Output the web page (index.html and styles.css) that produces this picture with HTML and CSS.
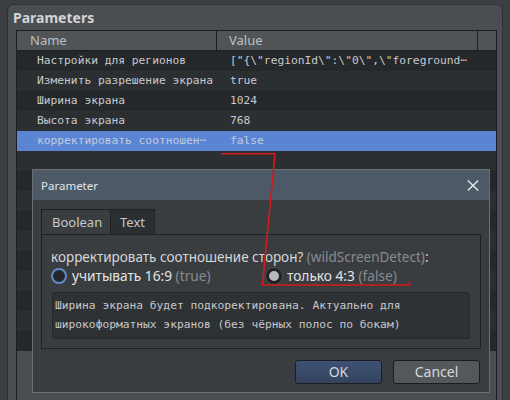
FILE: index.html
```html
<!DOCTYPE html>
<html>
<head>
<meta charset="utf-8">
<link rel="stylesheet" href="styles.css">
</head>
<body>
<div class="panel">
  <div class="panel-title">Parameters</div>
  <div class="table">
    <div class="thead">
      <div class="th th-name">Name</div>
      <div class="th th-value">Value</div>
      <div class="th th-extra"></div>
    </div>
    <div class="tbody">
      <div class="row"><span class="c-name">Настройки для регионов</span><span class="c-val">["{\"regionId\":\"0\",\"foreground⋯</span></div>
      <div class="row"><span class="c-name">Изменить разрешение экрана</span><span class="c-val">true</span></div>
      <div class="row"><span class="c-name">Ширина экрана</span><span class="c-val">1024</span></div>
      <div class="row"><span class="c-name">Высота экрана</span><span class="c-val">768</span></div>
      <div class="row selected"><span class="c-name">корректировать соотношен⋯</span><span class="c-val">false</span></div>
      <div class="row"></div>
      <div class="row"></div>
      <div class="row"></div>
      <div class="row"></div>
      <div class="row"></div>
      <div class="row"></div>
      <div class="row"></div>
      <div class="row"></div>
      <div class="row"></div>
      <div class="row"></div>
    </div>
  </div>
</div>

<div class="dialog">
  <div class="dlg-title">
    <span>Parameter</span>
    <svg class="close" width="12" height="11" viewBox="0 0 12 11"><path d="M0.8 0.5 L11.2 10.5 M11.2 0.5 L0.8 10.5" stroke="#e6e8ea" stroke-width="1.4" fill="none"/></svg>
  </div>
  <div class="dlg-body">
    <div class="tabs">
      <div class="tab active">Boolean</div>
      <div class="tab">Text</div>
    </div>
    <div class="tab-panel">
      <div class="question">корректировать соотношение сторон? <span class="muted">(wildScreenDetect)</span>:</div>
      <div class="radios">
        <div class="radio"><span class="dot dot-off"></span><span>учитывать 16:9 <span class="muted">(true)</span></span></div>
        <div class="radio"><span class="dot dot-on"></span><span>только 4:3 <span class="muted">(false)</span></span></div>
      </div>
      <div class="desc">Ширина экрана будет подкоректирована. Актуально для<br>широкоформатных экранов (без чёрных полос по бокам)</div>
    </div>
    <div class="buttons">
      <div class="btn ok">OK</div>
      <div class="btn cancel">Cancel</div>
    </div>
  </div>
</div>

<svg class="annot" width="510" height="400" viewBox="0 0 510 400">
  <polyline points="221,153.8 275,153.8 262.5,285 409.5,285 410,281.5" fill="none" stroke="#d41a1a" stroke-width="1.6"/>
</svg>
</body>
</html>
```

FILE: styles.css
```css
* { box-sizing: border-box; }
html, body { margin: 0; padding: 0; }
body {
  width: 510px;
  height: 400px;
  overflow: hidden;
  position: relative;
  background: #3c3f42;
  font-family: "Noto Sans", sans-serif;
}

.panel {
  margin: 4px 7px 0 7px;
  height: 396px;
  overflow: hidden;
  background: #4a4e51;
  border: 1px solid #2f3235;
  border-bottom: none;
  border-radius: 6px 6px 0 0;
}
.panel-title {
  height: 25px;
  line-height: 26px;
  padding-left: 5px;
  font-weight: bold;
  font-size: 14px;
  color: #d2d4d6;
}
.table {
  margin: 0 5px 0 8px;
  height: 370px;
  overflow: hidden;
  border: 1px solid #1c1e21;
  border-bottom: none;
}
.thead {
  display: grid;
  grid-template-columns: 200px 261px 1fr;
  height: 20px;
  background: #505457;
  border-bottom: 1px solid #1c1e21;
}
.th {
  font-size: 13px;
  line-height: 19px;
  color: #b9c0c6;
  border-right: 1px solid #1c1e21;
}
.th-extra { border-right: none; }
.th-name { padding-left: 13px; }
.th-value { padding-left: 12px; }

.row {
  display: grid;
  grid-template-columns: 200px 1fr;
  height: 20px;
  line-height: 20px;
  font-family: "DejaVu Sans Mono", monospace;
  font-size: 11.25px;
  color: #c8c9ca;
  background: #25282b;
  white-space: nowrap;
}
.row:nth-child(even) { background: #2c2f32; }
.row.selected { background: #5b85d4; color: #c3cbdc; }
.c-name { padding-left: 20px; overflow: hidden; }
.c-val { padding-left: 13px; overflow: hidden; }

.dialog {
  position: absolute;
  left: 32px;
  top: 169px;
  width: 458px;
  height: 224px;
  border: 1px solid #6a6f74;
  background: #3a3d40;
}
.dlg-title {
  height: 30px;
  background: #4d5967;
  display: flex;
  align-items: center;
  justify-content: space-between;
  padding: 0 10px 0 8px;
  font-size: 11.5px;
  color: #e2e5e8;
}
.close { display: block; }
.dlg-body {
  padding: 9px 8px 0 8px;
}
.tabs {
  display: flex;
  height: 25px;
}
.tab {
  font-size: 13px;
  line-height: 25px;
  color: #c4c8cc;
  border: 1px solid #1f2124;
  border-bottom: none;
  background: #2c2f32;
  padding: 0 9px;
}
.tab.active {
  background: #3a3d40;
  width: 69px;
  padding-left: 10px;
  border-right: none;
}
.tab-panel {
  border: 1px solid #1f2124;
  width: 440px;
  height: 115px;
  padding: 14px 10px 0 9px;
}
.question {
  font-size: 13.5px;
  line-height: 17px;
  color: #d4d6d8;
  white-space: nowrap;
}
.muted { color: #888b8e; }
.radios {
  display: grid;
  grid-template-columns: 215px 1fr;
  height: 17px;
  margin-top: 1px;
}
.radio {
  display: flex;
  align-items: center;
  gap: 5px;
  font-size: 13.7px;
  line-height: 17px;
  color: #e2e4e6;
}
.dot {
  width: 16px;
  height: 16px;
  border-radius: 50%;
  flex: none;
}
.dot-off {
  border: 2px solid #5e8cc4;
  background: #25272a;
}
.dot-on {
  border: 3px solid #202225;
  background: #b8b9ba;
  box-shadow: 0 0 0 1px #4a4d50;
}
.desc {
  margin: 8px 0 0 1px;
  height: 47px;
  border: 1px solid #25282b;
  border-radius: 3px;
  background: #2f3235;
  padding: 3px 2px;
  font-family: "DejaVu Sans Mono", monospace;
  font-size: 11.25px;
  line-height: 19px;
  color: #c8c9ca;
  white-space: nowrap;
}
.buttons {
  display: flex;
  justify-content: flex-end;
  gap: 11px;
  margin-top: 11px;
  padding-right: 1px;
}
.btn {
  width: 87px;
  height: 24px;
  border: 1px solid #1b1d20;
  border-radius: 3px;
  font-size: 14px;
  line-height: 22px;
  text-align: center;
  color: #d4d8dc;
}
.ok { background: linear-gradient(#3f5275, #33435d); }
.cancel { background: #55585b; }

.annot {
  position: absolute;
  left: 0;
  top: 0;
  pointer-events: none;
}
```
